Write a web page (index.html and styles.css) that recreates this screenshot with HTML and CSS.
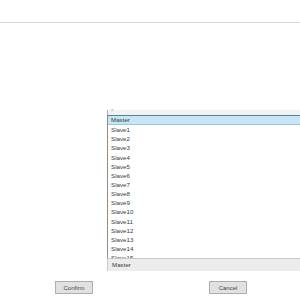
FILE: index.html
```html
<!DOCTYPE html>
<html lang="en">
<head>
    <meta charset="UTF-8">
    <title>Select Unit</title>
    <link rel="stylesheet" href="styles.css">
</head>
<body>
    <div class="topbar"></div>

    <div class="main">
        <div class="combo">
            <div class="combo-head"><span class="caret">^</span></div>
            <ul class="combo-list">
                <li class="selected">Master</li>
                <li>Slave1</li>
                <li>Slave2</li>
                <li>Slave3</li>
                <li>Slave4</li>
                <li>Slave5</li>
                <li>Slave6</li>
                <li>Slave7</li>
                <li>Slave8</li>
                <li>Slave9</li>
                <li>Slave10</li>
                <li>Slave11</li>
                <li>Slave12</li>
                <li>Slave13</li>
                <li>Slave14</li>
                <li>Slave15</li>
            </ul>
            <div class="combo-foot">Master</div>
        </div>
    </div>

    <div class="actions">
        <button class="btn">Confirm</button>
        <button class="btn">Cancel</button>
    </div>
</body>
</html>
```

FILE: styles.css
```css
html, body {
    margin: 0;
    padding: 0;
    width: 300px;
    height: 300px;
    overflow: hidden;
    background: #fff;
    font-family: 'Liberation Sans', Arial, sans-serif;
    color: #3a3a3a;
}
.topbar {
    height: 22px;
    border-bottom: 1px solid #d9d9d9;
}
.main {
    padding: 87px 0 0 107px;
}
.combo {
    width: 200px;
}
.combo-head {
    height: 5px;
    background: #f2f2f2;
    border-left: 1px solid #b5b5b5;
    position: relative;
}
.caret {
    position: absolute;
    left: 3px;
    top: -1px;
    font-size: 5px;
    line-height: 5px;
    color: #888;
}
.combo-list {
    list-style: none;
    margin: 0;
    padding: 0;
    height: 142px;
    overflow: hidden;
    border-top: 1px solid #4d8797;
    border-left: 1px solid #8c8c8c;
}
.combo-list li {
    height: 9.15px;
    line-height: 9.15px;
    font-size: 6.2px;
    padding-left: 3px;
    white-space: nowrap;
}
.combo-list li.selected {
    background: #c7e6f5;
    border-bottom: 1px solid #9cc7da;
    height: 8.15px;
    line-height: 8.6px;
}
.combo-foot {
    height: 12px;
    line-height: 12px;
    font-size: 6.2px;
    padding-left: 4px;
    background: #ececec;
    border-top: 1px solid #c9c9c9;
    border-left: 1px solid #c9c9c9;
}
.actions {
    display: flex;
    gap: 116px;
    padding: 10px 0 0 55px;
}
.btn {
    width: 38px;
    height: 13px;
    padding: 0;
    background: #e1e1e1;
    border: 1px solid #adadad;
    border-radius: 0;
    font-family: 'Liberation Sans', Arial, sans-serif;
    font-size: 6px;
    color: #444;
}
```
